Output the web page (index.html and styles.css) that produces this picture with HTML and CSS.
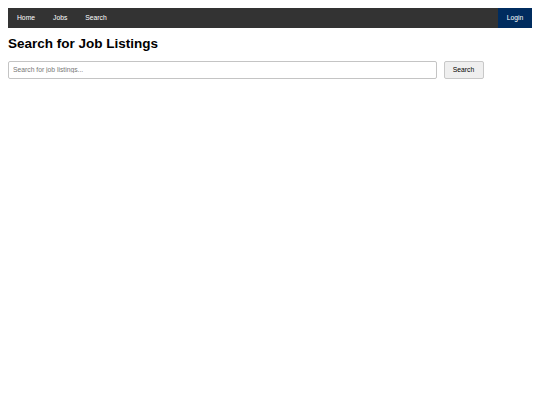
FILE: index.html
```html
<!DOCTYPE html>
<html lang="en">
<head>
<meta charset="utf-8">
<title>Search for Job Listings</title>
<link rel="stylesheet" href="styles.css">
</head>
<body>
<nav class="navbar">
  <a class="nav-link" href="#">Home</a>
  <a class="nav-link" href="#">Jobs</a>
  <a class="nav-link" href="#">Search</a>
  <a class="nav-login" href="#">Login</a>
</nav>
<main>
  <h1 class="title">Search for Job Listings</h1>
  <form class="search-form">
    <input class="search-input" type="text" placeholder="Search for job listings...">
    <button class="search-button" type="button">Search</button>
  </form>
</main>
</body>
</html>
```
FILE: styles.css
```css
body {
  margin: 8px;
  font-family: "Liberation Sans", Arial, sans-serif;
  background: #fff;
  color: #000;
}
.navbar {
  display: flex;
  align-items: stretch;
  height: 19.5px;
  background: #333333;
}
.nav-link {
  display: flex;
  align-items: center;
  padding: 0 9px;
  color: #fff;
  text-decoration: none;
  font-size: 6.75px;
}
.nav-login {
  margin-left: auto;
  display: flex;
  align-items: center;
  padding: 0 8.7px;
  background: #002c5f;
  color: #fff;
  text-decoration: none;
  font-size: 6.75px;
}
.title {
  margin: 8.5px 0 9.5px;
  font-size: 13.5px;
  font-weight: bold;
  line-height: normal;
}
.search-form {
  display: flex;
  gap: 6.5px;
  margin: 0;
}
.search-input {
  box-sizing: border-box;
  width: 429px;
  height: 18.5px;
  margin: 0;
  padding: 0 4px;
  border: 1px solid #c4c4c4;
  border-radius: 2px;
  font-family: "Liberation Sans", Arial, sans-serif;
  font-size: 6.75px;
  color: #000;
  outline: none;
}
.search-input::placeholder {
  color: #777;
}
.search-button {
  box-sizing: border-box;
  width: 40px;
  height: 18.5px;
  margin: 0;
  padding: 0;
  border: 1px solid #c8c8c8;
  border-radius: 2px;
  background: #efefef;
  font-family: "Liberation Sans", Arial, sans-serif;
  font-size: 6.75px;
  color: #000;
}
```
